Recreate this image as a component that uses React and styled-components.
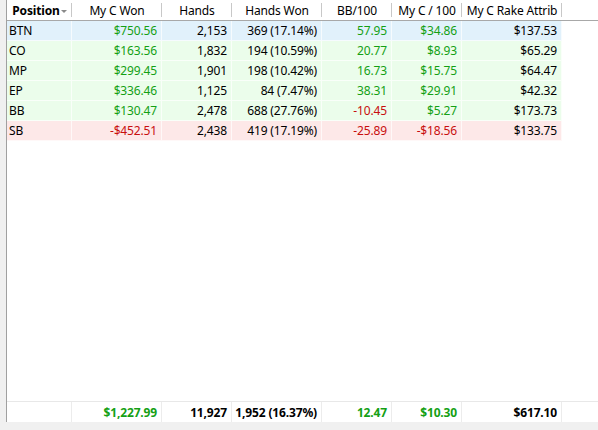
import React from 'react';
import styled, { createGlobalStyle } from 'styled-components';

const Global = createGlobalStyle`
  html, body { margin: 0; padding: 0; background: #f0f0f0; }
  body { font-family: "Noto Sans", "Open Sans", sans-serif; font-size: 12px; letter-spacing: -0.15px; color: #000; }
`;

const cols = '65px 90px 70px 90px 70px 70px 100px';

const Page = styled.div`
  width: 598px;
  height: 430px;
  display: flex;
  background: #f0f0f0;
  overflow: hidden;
`;

const Panel = styled.div`
  margin-left: 6px;
  flex: 1;
  height: 422px;
  border-left: 1px solid #a0a0a0;
  background: #fff;
  display: flex;
  flex-direction: column;
`;

const HeaderRow = styled.div`
  display: grid;
  grid-template-columns: ${cols} 1fr;
  border-bottom: 1px solid #a8a8a8;
  box-sizing: border-box;
  height: 21px;
`;

const HeadCell = styled.div`
  display: flex;
  align-items: center;
  justify-content: center;
  position: relative;
  font-weight: ${p => (p.$bold ? 700 : 400)};
  white-space: nowrap;
  &::after {
    content: ${p => (p.$last ? 'none' : '""')};
    position: absolute;
    right: 0;
    top: 3px;
    bottom: 3px;
    width: 1px;
    background: #c8c8c8;
  }
`;

const SortArrow = styled.span`
  display: inline-block;
  width: 0;
  height: 0;
  margin-left: 1px;
  margin-top: 3px;
  border-left: 3px solid transparent;
  border-right: 3px solid transparent;
  border-top: 3px solid #8a8a8a;
`;

const Row = styled.div`
  display: grid;
  grid-template-columns: ${cols} 1fr;
  height: 20px;
  box-sizing: border-box;
`;

const bgs = { blue: '#e1f1fb', green: '#ebfdeb', red: '#fde8e8' };

const Cell = styled.div`
  display: flex;
  align-items: center;
  justify-content: ${p => (p.$left ? 'flex-start' : 'flex-end')};
  padding-left: ${p => (p.$left ? '2px' : '0')};
  padding-right: ${p => (p.$left ? '0' : '4px')};
  background: ${p => bgs[p.$bg] || 'transparent'};
  border-right: 1px solid ${p => (p.$bg ? 'rgba(255,255,255,0.7)' : 'transparent')};
  border-bottom: 1px solid ${p => (p.$bg ? 'rgba(255,255,255,0.7)' : 'transparent')};
  color: ${p => (p.$tone === 'pos' ? '#14a014' : p.$tone === 'neg' ? '#c80f0f' : '#000')};
  white-space: nowrap;
`;

const Spacer = styled.div`
  flex: 1;
`;

const FooterRow = styled.div`
  display: grid;
  grid-template-columns: ${cols} 1fr;
  height: 20px;
  border-top: 1px solid #e8e8e8;
`;

const FootCell = styled.div`
  display: flex;
  align-items: center;
  justify-content: flex-end;
  padding-right: 4px;
  font-weight: 700;
  border-right: 1px solid ${p => (p.$last ? 'transparent' : '#ececec')};
  color: ${p => (p.$tone === 'pos' ? '#14a014' : '#000')};
  white-space: nowrap;
`;

const headers = ['My C Won', 'Hands', 'Hands Won', 'BB/100', 'My C / 100', 'My C Rake Attrib'];

const rows = [
  { pos: 'BTN', bg: 'blue', won: '$750.56', hands: '2,153', hw: '369 (17.14%)', bb: '57.95', c100: '$34.86', rake: '$137.53' },
  { pos: 'CO', bg: 'green', won: '$163.56', hands: '1,832', hw: '194 (10.59%)', bb: '20.77', c100: '$8.93', rake: '$65.29' },
  { pos: 'MP', bg: 'green', won: '$299.45', hands: '1,901', hw: '198 (10.42%)', bb: '16.73', c100: '$15.75', rake: '$64.47' },
  { pos: 'EP', bg: 'green', won: '$336.46', hands: '1,125', hw: '84 (7.47%)', bb: '38.31', c100: '$29.91', rake: '$42.32' },
  { pos: 'BB', bg: 'green', won: '$130.47', hands: '2,478', hw: '688 (27.76%)', bb: '-10.45', c100: '$5.27', rake: '$173.73' },
  { pos: 'SB', bg: 'red', won: '-$452.51', hands: '2,438', hw: '419 (17.19%)', bb: '-25.89', c100: '-$18.56', rake: '$133.75' },
];

const tone = v => (v.startsWith('-') ? 'neg' : 'pos');

export default function App() {
  return (
    <Page>
      <Global />
      <Panel>
        <HeaderRow>
          <HeadCell $bold>
            Position<SortArrow />
          </HeadCell>
          {headers.map(h => (
            <HeadCell key={h}>{h}</HeadCell>
          ))}
          <HeadCell $last />
        </HeaderRow>
        {rows.map(r => (
          <Row key={r.pos}>
            <Cell $left $bg={r.bg}>{r.pos}</Cell>
            <Cell $bg={r.bg} $tone={tone(r.won)}>{r.won}</Cell>
            <Cell $bg={r.bg}>{r.hands}</Cell>
            <Cell $bg={r.bg}>{r.hw}</Cell>
            <Cell $bg={r.bg} $tone={tone(r.bb)}>{r.bb}</Cell>
            <Cell $bg={r.bg} $tone={tone(r.c100)}>{r.c100}</Cell>
            <Cell $bg={r.bg}>{r.rake}</Cell>
            <Cell />
          </Row>
        ))}
        <Spacer />
        <FooterRow>
          <FootCell />
          <FootCell $tone="pos">$1,227.99</FootCell>
          <FootCell>11,927</FootCell>
          <FootCell>1,952 (16.37%)</FootCell>
          <FootCell $tone="pos">12.47</FootCell>
          <FootCell $tone="pos">$10.30</FootCell>
          <FootCell>$617.10</FootCell>
          <FootCell $last />
        </FooterRow>
      </Panel>
    </Page>
  );
}
